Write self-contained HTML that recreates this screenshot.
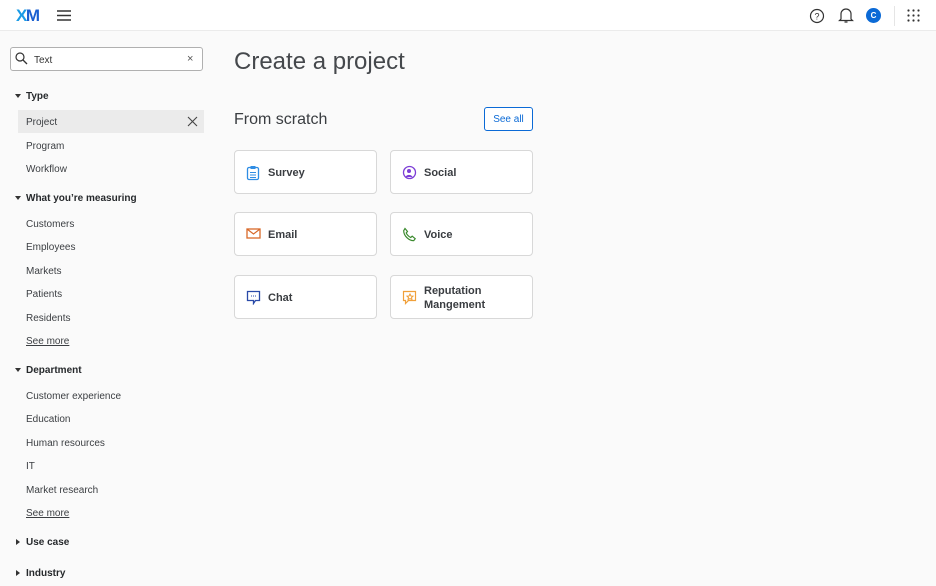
<!DOCTYPE html>
<html><head><style>
*{box-sizing:border-box;margin:0;padding:0}
body{width:936px;height:586px;background:#fafafa;font-family:"Liberation Sans",sans-serif;color:#32363a;position:relative;overflow:hidden}
.hdr{position:absolute;left:0;top:0;width:936px;height:31px;background:#fff;border-bottom:1px solid #ebebeb}
.a{position:absolute}
.sb{font-size:10px;color:#3b3e42}
.hd{font-size:10px;font-weight:bold;color:#26292c}
.card{position:absolute;width:143px;height:44px;background:#fff;border:1px solid #d8d8d8;border-radius:4px;font-size:11px;font-weight:bold;color:#3a3d41}
.card svg{position:absolute;left:11px;top:14px}
.card span{position:absolute;left:33px;top:16px}
.tri{display:inline-block;width:0;height:0;border-left:3.5px solid transparent;border-right:3.5px solid transparent;border-top:4px solid #333;margin-right:5px;vertical-align:1px}
.trir{display:inline-block;width:0;height:0;border-top:3.5px solid transparent;border-bottom:3.5px solid transparent;border-left:4px solid #333;margin-right:6px;margin-left:2px}
u{text-decoration:underline}
</style></head><body>
<div class="hdr"></div>
<div class="a" style="left:16px;top:6px;font-size:17px;font-weight:bold;letter-spacing:-1.5px;color:#1a9be6">X<span style="color:#1a5fd0">M</span></div>
<svg class="a" style="left:57px;top:10px" width="14" height="11"><path d="M0 1h14M0 5.5h14M0 10h14" stroke="#333" stroke-width="1.4"/></svg>
<svg class="a" style="left:809px;top:8px" width="16" height="16"><circle cx="8" cy="8" r="6.5" fill="none" stroke="#333" stroke-width="1.2"/><text x="8" y="11.5" font-size="9" text-anchor="middle" font-family="Liberation Sans" fill="#333">?</text></svg>
<svg class="a" style="left:838px;top:7px" width="16" height="17"><path d="M3 12V7a5 5 0 0110 0v5l1.5 1.5h-13z M6.5 15h3" fill="none" stroke="#333" stroke-width="1.2"/></svg>
<div class="a" style="left:866px;top:8px;width:15px;height:15px;border-radius:50%;background:#0b6ad6;color:#fff;font-size:8px;font-weight:bold;text-align:center;line-height:15px">C</div>
<div class="a" style="left:894px;top:6px;width:1px;height:20px;background:#e5e5e5"></div>
<svg class="a" style="left:907px;top:9px" width="13" height="13" fill="#333"><circle cx="1.5" cy="1.5" r="1.1"/><circle cx="6.5" cy="1.5" r="1.1"/><circle cx="11.5" cy="1.5" r="1.1"/><circle cx="1.5" cy="6.5" r="1.1"/><circle cx="6.5" cy="6.5" r="1.1"/><circle cx="11.5" cy="6.5" r="1.1"/><circle cx="1.5" cy="11.5" r="1.1"/><circle cx="6.5" cy="11.5" r="1.1"/><circle cx="11.5" cy="11.5" r="1.1"/></svg>

<div class="a" style="left:10px;top:47px;width:193px;height:24px;background:#fff;border:1px solid #b0b0b0;border-radius:3px"></div>
<svg class="a" style="left:15px;top:52px" width="13" height="13"><circle cx="5" cy="5" r="4" fill="none" stroke="#333" stroke-width="1.2"/><path d="M8 8l4 4" stroke="#333" stroke-width="1.3"/></svg>
<div class="a sb" style="left:34px;top:55px;color:#333">Text</div>
<div class="a" style="left:187px;top:53px;font-size:11px;color:#555">×</div>

<div class="a hd" style="left:15px;top:91px"><span class="tri"></span>Type</div>
<div class="a" style="left:18px;top:110px;width:186px;height:23px;background:#ebebeb"></div>
<div class="a sb" style="left:26px;top:117px">Project</div>
<svg class="a" style="left:187px;top:116px" width="11" height="11"><path d="M1 1l9 9M10 1l-9 9" stroke="#444" stroke-width="1.1"/></svg>
<div class="a sb" style="left:26px;top:141px">Program</div>
<div class="a sb" style="left:26px;top:164px">Workflow</div>
<div class="a hd" style="left:15px;top:193px"><span class="tri"></span>What you’re measuring</div>
<div class="a sb" style="left:26px;top:219px">Customers</div>
<div class="a sb" style="left:26px;top:242px">Employees</div>
<div class="a sb" style="left:26px;top:266px">Markets</div>
<div class="a sb" style="left:26px;top:289px">Patients</div>
<div class="a sb" style="left:26px;top:313px">Residents</div>
<div class="a sb" style="left:26px;top:336px"><u>See more</u></div>
<div class="a hd" style="left:15px;top:365px"><span class="tri"></span>Department</div>
<div class="a sb" style="left:26px;top:391px">Customer experience</div>
<div class="a sb" style="left:26px;top:414px">Education</div>
<div class="a sb" style="left:26px;top:438px">Human resources</div>
<div class="a sb" style="left:26px;top:461px">IT</div>
<div class="a sb" style="left:26px;top:485px">Market research</div>
<div class="a sb" style="left:26px;top:508px"><u>See more</u></div>
<div class="a hd" style="left:14px;top:537px"><span class="trir"></span>Use case</div>
<div class="a hd" style="left:14px;top:568px"><span class="trir"></span>Industry</div>

<div class="a" style="left:234px;top:48px;font-size:24px;color:#45484c">Create a project</div>
<div class="a" style="left:234px;top:111px;font-size:16px;color:#3a3d41">From scratch</div>
<div class="a" style="left:484px;top:107px;width:49px;height:24px;border:1px solid #0b6ad6;border-radius:3px;background:#fff;color:#0b6ad6;font-size:10px;text-align:center;line-height:23px">See all</div>

<div class="card" style="left:234px;top:150px"><svg width="14" height="16"><rect x="1.5" y="2.5" width="11" height="12" rx="1.5" fill="none" stroke="#2f8de4" stroke-width="1.3"/><rect x="4.5" y="1" width="5" height="3" fill="#2f8de4"/><path d="M4 7.5h6M4 10h6M4 12.5h6" stroke="#2f8de4"/></svg><span>Survey</span></div>
<div class="card" style="left:390px;top:150px"><svg width="15" height="15"><circle cx="7.5" cy="7.5" r="6" fill="none" stroke="#7d3ed6" stroke-width="1.3"/><circle cx="7" cy="6" r="2" fill="#7d3ed6"/><path d="M3.5 12a4 4 0 017 0" fill="#7d3ed6"/></svg><span>Social</span></div>
<div class="card" style="left:234px;top:212px"><svg width="15" height="13"><rect x="1" y="2" width="13" height="9" fill="none" stroke="#d8692a" stroke-width="1.3"/><path d="M1 2l6.5 5L14 2" fill="none" stroke="#d8692a" stroke-width="1.2"/></svg><span>Email</span></div>
<div class="card" style="left:390px;top:212px"><svg width="15" height="15"><path d="M3 1.5l2.5 3-1.3 1.5c1 2 2.5 3.5 4.5 4.5l1.5-1.3 3 2.5-1.5 2c-5 0-10-5-10-10z" fill="none" stroke="#3b8a2e" stroke-width="1.2"/></svg><span>Voice</span></div>
<div class="card" style="left:234px;top:275px"><svg width="15" height="15"><path d="M1.5 1.5h12v9h-4l-2 3v-3h-6z" fill="none" stroke="#2a4aa8" stroke-width="1.3"/><path d="M5 6h1M7 6h1M9 6h1" stroke="#2a4aa8"/></svg><span>Chat</span></div>
<div class="card" style="left:390px;top:275px"><svg width="15" height="15"><path d="M1.5 1.5h12v9h-7l-3 3v-3h-2z" fill="none" stroke="#f0a03a" stroke-width="1.2"/><path d="M8 4l1 2 2 .2-1.5 1.4.5 2-2-1-2 1 .5-2L5 6.2 7 6z" fill="none" stroke="#f0a03a"/></svg><span style="top:8px;line-height:14px">Reputation<br>Mangement</span></div>
</body></html>
